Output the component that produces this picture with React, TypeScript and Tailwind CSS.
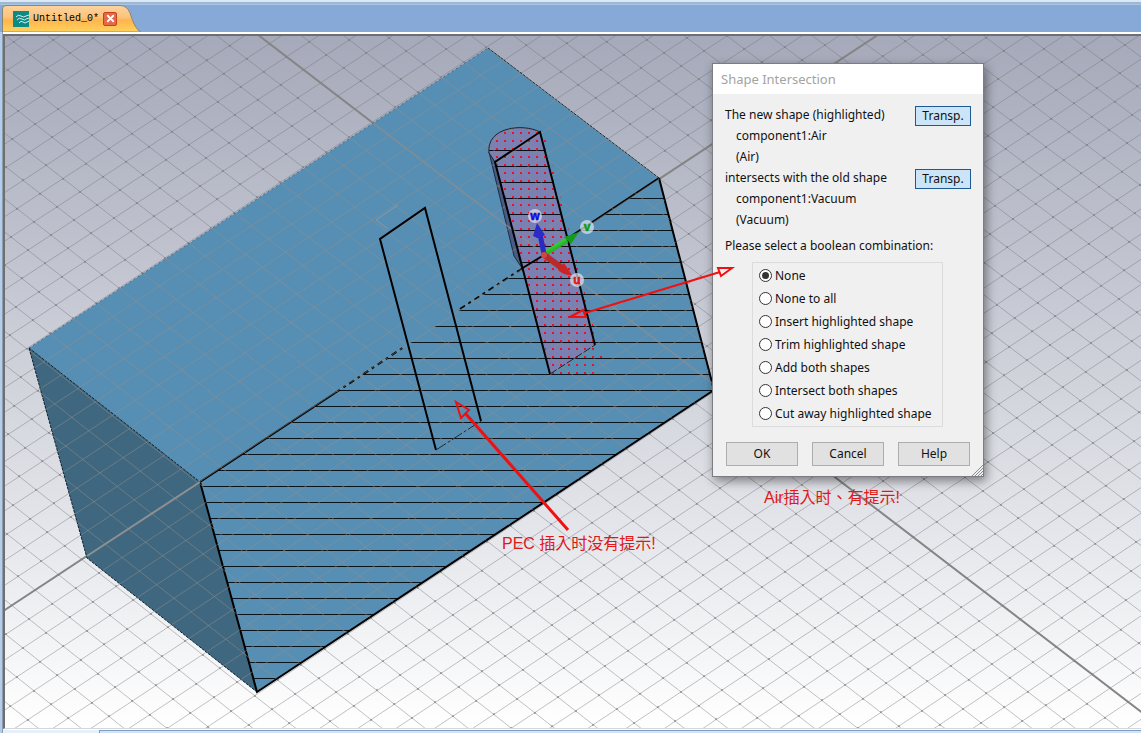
import { useState } from 'react';
import { X } from 'lucide-react';

const UI_FONT = 'font-["Noto_Sans","Open_Sans",sans-serif]';

const OPTIONS = [
  'None',
  'None to all',
  'Insert highlighted shape',
  'Trim highlighted shape',
  'Add both shapes',
  'Intersect both shapes',
  'Cut away highlighted shape',
];

// Working plane: i runs down-right, j runs up-right, with a slight perspective
const project = (i: number, j: number) => {
  const w = 1 - 0.00058 * i + 0.0003 * j;
  return {
    x: 544.5 + (17.35 * i + 23 * j) / w,
    y: 254.5 + (13.3 * i - 15.15 * j) / w,
  };
};

const range = (from: number, to: number) => Array.from({ length: to - from + 1 }, (_, k) => from + k);

const segment = (i1: number, j1: number, i2: number, j2: number) => {
  const p = project(i1, j1);
  const q = project(i2, j2);
  return `M${p.x.toFixed(1)} ${p.y.toFixed(1)}L${q.x.toFixed(1)} ${q.y.toFixed(1)}`;
};

const GRID_PATH = [
  ...range(-60, 70).map((i) => segment(i, -60, i, 60)),
  ...range(-60, 60).map((j) => segment(-60, j, 70, j)),
].join('');

const AXIS_PATH = segment(-60, 0, 70, 0) + segment(0, -60, 0, 60);

const NODES_PATH = range(-45, 60)
  .flatMap((i) => range(-45, 50).map((j) => project(i, j)))
  .filter((p) => p.x > 0 && p.x < 1900 && p.y > 30 && p.y < 1100)
  .map((p) => `M${Math.round(p.x) - 1} ${Math.round(p.y)}h2`)
  .join('');

const HATCH_PATH = range(0, 30).map((k) => `M190 ${198.5 + 16 * k}H720`).join('');
const AIR_HATCH_PATH = range(0, 13).map((k) => `M480 ${150.5 + 16 * k}H610`).join('');
const AIR_DOTS_PATH = range(0, 30)
  .flatMap((row) => range(0, 14).map((col) => `M${488 + 8 * col} ${133 + 8 * row}h2`))
  .join('');

const BOX_OUTLINE = '488,48 659,178 714,390 257,692 87,558 29,348';
const AIR_OUTLINE = 'M540 132C523 123 486 127 489 153L495 162L550 374L595 345Z';

function Badge({ x, y, label, color }: { x: number; y: number; label: string; color: string }) {
  return (
    <g>
      <circle cx={x} cy={y} r="7" fill="#dfe6f0" fillOpacity="0.7" />
      <text
        x={x}
        y={y + 4}
        textAnchor="middle"
        fill={color}
        stroke={color}
        strokeWidth="0.5"
        className='font-["Liberation_Sans",sans-serif] text-[12px] font-bold'
      >
        {label}
      </text>
    </g>
  );
}

function Scene() {
  return (
    <svg className="block h-full w-full" role="img" aria-label="3D model view">
      <defs>
        <linearGradient id="green" x1="0" y1="0" x2="1" y2="1">
          <stop offset="0.3" stopColor="#3fe03f" />
          <stop offset="0.8" stopColor="#138a13" />
        </linearGradient>
        <clipPath id="front">
          <polygon points="200,482 659,178 714,390 257,692" />
        </clipPath>
        <clipPath id="air">
          <path d={AIR_OUTLINE} />
        </clipPath>
        <clipPath id="air-dots">
          <path d="M490 152C488 130 522 123 540 131L545 137L599 348L603 359L592 376H552L496 162Z" />
        </clipPath>
        <clipPath id="box">
          <polygon points={BOX_OUTLINE} />
        </clipPath>
      </defs>

      <g transform="translate(-5 -36)" fill="none">
        {/* Plane */}
        <path d={GRID_PATH} stroke="#75777c" strokeOpacity="0.45" />
        <path d={NODES_PATH} stroke="#77787c" strokeWidth="2" strokeOpacity="0.5" />
        <path d={AXIS_PATH} stroke="#858585" strokeWidth="2" />

        {/* Vacuum box */}
        <polygon points="488,48 659,178 200,482 29,348" fill="#578fb4" />
        <polygon points="29,348 200,482 257,692 87,558" fill="#3f6880" />
        <polygon points="200,482 659,178 714,390 257,692" fill="#578fb4" />
        <path d={HATCH_PATH} stroke="#0a141c" clipPath="url(#front)" />
        <path d="M29 348L200 482M29 348L87 558L257 692M488 48L659 178" stroke="#10202c" strokeDasharray="3 1" />
        <path d="M29 348L488 48" stroke="#24445a" strokeDasharray="2 3" strokeOpacity="0.6" />
        <path d="M200 482L335 393M520 270L659 178" stroke="#000" strokeWidth="2" />
        <path d="M335 393L404 347M460 309L520 270" stroke="#000" strokeWidth="2" strokeDasharray="6 4 3 4" />
        <path d="M200 482L257 692L714 390M659 178L714 390" stroke="#000" strokeWidth="2" />

        {/* Air body */}
        <path d="M489 152L514 256L522 268L495 162Z" fill="#4b5c84" stroke="#1d2a44" />
        <path d={AIR_OUTLINE} fill="#7a80b2" />
        <path d={AIR_HATCH_PATH} stroke="#0c0c18" clipPath="url(#air)" />

        {/* Plane seen through the solids */}
        <g clipPath="url(#box)">
          <path d={GRID_PATH} stroke="#958f8a" strokeOpacity="0.5" />
          <path d={segment(-60, 0, 70, 0)} stroke="#8f8f8d" strokeWidth="2" strokeOpacity="0.45" />
          <path d="M87 556L200 482" stroke="#8d9091" strokeWidth="2" />
        </g>

        <path d={AIR_DOTS_PATH} stroke="#e8102c" strokeWidth="2" clipPath="url(#air-dots)" />
        <path d="M495 162L489 153C486 127 523 123 540 132" stroke="#222" />
        <path d="M550 374L495 162L540 132L595 345" stroke="#000" strokeWidth="2" />
        <path d="M550 374L595 345" stroke="#222" strokeDasharray="8 2" />
        <path d="M521 269L544 255" stroke="#000" strokeWidth="2" />

        {/* PEC sheet */}
        <path d="M398 205L376 220L388 229" stroke="#a99f95" strokeOpacity="0.6" />
        <path d="M436 450L380 239L425 208L481 421" stroke="#000" strokeWidth="2" />
        <path d="M436 450L481 421" stroke="#1a2a33" strokeDasharray="12 2 3 2" />

        {/* Local axes */}
        <path d="M544 254L567 240" stroke="url(#green)" strokeWidth="5" />
        <path d="M564 237L579 232L571 244Z" fill="#159a1b" />
        <path d="M544 254L540 234" stroke="#2a2ac0" strokeWidth="5" />
        <path d="M533 236L537 223L545 235Q539 240 533 236Z" fill="#2b2bc8" />
        <path d="M543 254L562 268" stroke="#b92a2a" strokeWidth="6" />
        <path d="M558 270L564 263L572 275Q564 276 558 270Z" fill="#cc2424" />
        <circle cx="544" cy="255" r="3" fill="#d04545" />
        <Badge x={535} y={216} label="w" color="#0a0ae0" />
        <Badge x={587} y={227} label="v" color="#0c9a1c" />
        <Badge x={577} y={280} label="u" color="#e01414" />
      </g>
    </svg>
  );
}

function ShapeInfo({ title, name, material }: { title: string; name: string; material: string }) {
  return (
    <div className="flex items-start justify-between pr-3">
      <div className="leading-[21px]">
        <p>{title}</p>
        <p className="pl-[11px]">{name}</p>
        <p className="pl-[11px]">{material}</p>
      </div>
      <button
        type="button"
        className="mt-[2px] h-5 w-14 border border-[#1c5a94] bg-[#cce4f7] leading-4"
      >
        Transp.
      </button>
    </div>
  );
}

function IntersectionDialog() {
  const [choice, setChoice] = useState('None');

  return (
    <div
      role="dialog"
      aria-labelledby="dialog-title"
      className={`absolute top-[27px] left-[707px] w-[272px] border border-[#7b7d83] bg-[#f0f0f0] text-[12px] text-[#111] shadow-[2px_4px_10px_rgba(0,0,0,0.45)] ${UI_FONT}`}
    >
      <h1 id="dialog-title" className="bg-white px-2 text-[13px] leading-[30px] text-[#a3a3a3]">
        Shape Intersection
      </h1>
      <div className="flex flex-col pt-[10px] pl-3">
        <ShapeInfo title="The new shape (highlighted)" name="component1:Air" material="(Air)" />
        <ShapeInfo title="intersects with the old shape" name="component1:Vacuum" material="(Vacuum)" />
      </div>
      <p id="combination-label" className="mt-[6px] pl-3 leading-5">
        Please select a boolean combination:
      </p>
      <fieldset
        aria-labelledby="combination-label"
        className="mt-[6px] mr-10 ml-[39px] border border-[#dcdcdc] py-px pl-[6px]"
      >
        {OPTIONS.map((option) => (
          <label key={option} className="flex h-[23px] items-center gap-[3px]">
            <input
              type="radio"
              name="combination"
              checked={choice === option}
              onChange={() => setChoice(option)}
              className="grid size-[13px] appearance-none place-content-center rounded-full border border-[#333] bg-white before:size-[7px] before:rounded-full checked:before:bg-[#333]"
            />
            {option}
          </label>
        ))}
      </fieldset>
      <div className="flex gap-[14px] px-[13px] pt-[15px] pb-[10px]">
        {['OK', 'Cancel', 'Help'].map((label) => (
          <button key={label} type="button" className="h-6 flex-1 border border-[#adadad] bg-[#e1e1e1]">
            {label}
          </button>
        ))}
      </div>
      <svg className="absolute right-0 bottom-0 size-3" viewBox="0 0 12 12" stroke="#8a8a8a" aria-hidden="true">
        <path d="M1 12L12 1M4 12L12 4M7 12L12 7M10 12L12 10" />
      </svg>
    </div>
  );
}

function Notes() {
  return (
    <>
      <svg className="pointer-events-none absolute inset-0 h-full w-full" aria-hidden="true">
        <g transform="translate(-5 -36)" fill="none" stroke="#f01010">
          <path d="M465 413L568 530" strokeWidth="3" />
          <path d="M456 402L469 410L461 418Z" strokeWidth="2" />
          <path d="M585 313L720 272" strokeWidth="2" />
          <path d="M570 317L583 310L586 317Z" strokeWidth="2" />
          <path d="M732 268L718 268L721 276Z" strokeWidth="2" />
        </g>
      </svg>
      <div
        lang="zh-TW"
        className='text-[16px] leading-5 whitespace-nowrap text-[#e01818] font-["Liberation_Sans","Noto_Sans_CJK_TC",sans-serif]'
      >
        <p className="absolute top-[498px] left-[497px]">PEC 插入时没有提示!</p>
        <p className="absolute top-[452px] left-[759px]">Air插入时、有提示!</p>
      </div>
    </>
  );
}

function TabBar() {
  return (
    <div className="relative flex h-[28px] items-stretch border-t border-[#a9c4e4] bg-[#87a9d7] pl-[2px]">
      <svg className="absolute top-0 left-[2px] h-[27px] w-[139px]" viewBox="0 0 139 27" aria-hidden="true">
        <defs>
          <linearGradient id="tab" x1="0" y1="0" x2="0" y2="1">
            <stop offset="0" stopColor="#fbd3a0" />
            <stop offset="0.45" stopColor="#fdc27a" />
            <stop offset="0.55" stopColor="#ffb54c" />
            <stop offset="1" stopColor="#ffd25e" />
          </linearGradient>
        </defs>
        <path
          d="M0.5 27V4Q0.5 0.5 4 0.5H118Q125 0.5 128 8Q133 25 139 27Z"
          fill="url(#tab)"
          stroke="#8b8672"
        />
      </svg>
      <div className="relative flex items-center gap-1 pl-[11px]">
        <svg className="size-4" viewBox="0 0 16 16" aria-hidden="true">
          <rect width="16" height="16" fill="#0b8a86" />
          <path
            d="M3 6Q5 3 8 5T13 5L16 4M4 9Q6 6 9 8T13 8L16 7M6 12Q8 9 10 11T14 11L16 10"
            fill="none"
            stroke="#d8f4f0"
          />
        </svg>
        <span className='font-["Liberation_Mono",monospace] text-[10px] leading-4 text-black'>Untitled_0*</span>
        <button
          type="button"
          aria-label="Close tab"
          className="grid size-[14px] place-content-center rounded-[2px] border border-[#c8401f] bg-[#e26a4c] text-white"
        >
          <X size={11} strokeWidth={4} />
        </button>
      </div>
    </div>
  );
}

export default function App() {
  return (
    <div className="flex h-screen flex-col overflow-hidden bg-[#b3cdec]">
      <div className="h-1 border-b-2 border-[#9fb8d2] bg-[#d9e7f6]" />
      <TabBar />
      <div className="ml-[2px] flex min-h-0 flex-1 flex-col border-l border-[#8f9cab] bg-white pt-[2px]">
        <main className="relative min-h-0 flex-1 overflow-hidden border-t-2 border-b border-l-2 border-t-[#6e6f70] border-b-[#d4d8dc] border-l-[#6e6f70] bg-linear-to-b from-[#a5a9b9] to-white">
          <Scene />
          <IntersectionDialog />
          <Notes />
        </main>
        <div className="mt-px flex h-[3px] bg-[#e6f0fb]">
          <div className="ml-24 flex-1 border-t border-l border-[#7f9fc6] bg-[#d3e3f5]" />
        </div>
      </div>
    </div>
  );
}
